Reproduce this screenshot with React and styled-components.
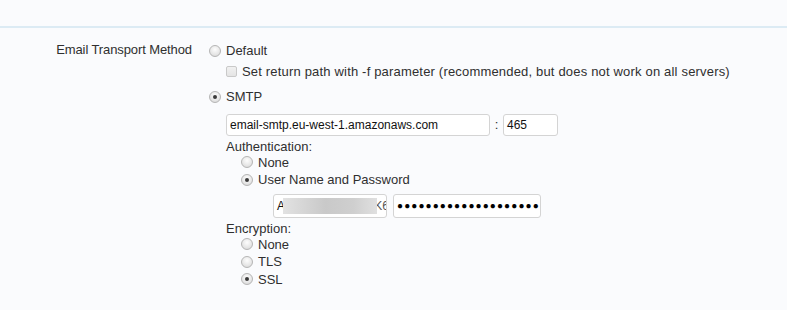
import React from 'react';
import styled, { createGlobalStyle } from 'styled-components';

const GlobalStyle = createGlobalStyle`
    html, body {
        margin: 0;
        padding: 0;
        background: #fafbfd;
    }
    body {
        font-family: "Liberation Sans", Arial, sans-serif;
        font-size: 13px;
        color: #2f2f2f;
    }
`

const Page = styled.div`
    width: 787px;
    height: 310px;
    background: #fafbfd;
    overflow: hidden;
`

const TopBar = styled.div`
    height: 26px;
    border-bottom: 2px solid #dcebf4;
`

const Form = styled.div`
    display: grid;
    grid-template-columns: 192px 1fr;
    column-gap: 17px;
    padding-top: 12px;
`

const FieldLabel = styled.div`
    text-align: right;
    line-height: 18px;
    margin-top: 1px;
    letter-spacing: -0.1px;
`

const Options = styled.div`
    display: flex;
    flex-direction: column;
`

const Choice = styled.label`
    display: flex;
    align-items: center;
    gap: 5px;
    height: 17.5px;
    margin-left: ${p => p.indent || 0}px;
    margin-top: ${p => p.top || 0}px;
`

const RadioDot = styled.span`
    width: 12px;
    height: 12px;
    border-radius: 50%;
    box-sizing: border-box;
    border: 1px solid #b5b5b5;
    background: radial-gradient(circle at 50% 35%, #fdfdfd 0%, #e6e6e6 60%, #d2d2d2 100%);
    display: flex;
    align-items: center;
    justify-content: center;
    flex-shrink: 0;
    &::after {
        content: '';
        width: 4px;
        height: 4px;
        border-radius: 50%;
        background: ${p => (p.checked ? '#3a3a3a' : 'transparent')};
    }
`

const CheckBox = styled.span`
    width: 11px;
    height: 11px;
    box-sizing: border-box;
    border: 1px solid #c9c9c9;
    border-radius: 2px;
    background: linear-gradient(#f1f1f1, #e4e4e4);
    flex-shrink: 0;
`

const LongText = styled.span`
    letter-spacing: 0.18px;
`

const Sub = styled.div`
    margin-left: 17px;
    display: flex;
    flex-direction: column;
`

const InputRow = styled.div`
    display: flex;
    align-items: center;
    margin-top: ${p => p.top || 0}px;
    margin-left: ${p => p.indent || 0}px;
`

const TextBox = styled.div`
    position: relative;
    box-sizing: border-box;
    width: ${p => p.w}px;
    height: ${p => p.h || 22}px;
    border: 1px solid #d4d4d4;
    border-radius: 3px;
    background: #fff;
    padding: 0 3px;
    display: flex;
    align-items: center;
    overflow: hidden;
    white-space: nowrap;
    font-size: 12px;
    color: #111;
`

const Colon = styled.span`
    width: 13px;
    text-align: center;
`

const Redact = styled.span`
    position: absolute;
    left: 9px;
    top: 3px;
    width: 94px;
    height: 16px;
    background: linear-gradient(90deg, #e2e2e2, #c9c9c9 45%, #cfcfcf 75%, #e0e0e0);
`

const Tail = styled.span`
    margin-left: auto;
    margin-right: -6px;
    color: #555;
`

const Dots = styled.span`
    font-size: 10px;
    letter-spacing: 1.1px;
    color: #000;
`

const SectionTitle = styled.div`
    line-height: 14px;
    margin-top: ${p => p.top || 0}px;
`

const Radio = ({ checked, children, indent, top }) => (
    <Choice indent={indent} top={top}>
        <RadioDot checked={checked} />
        <span>{children}</span>
    </Choice>
)

const App = () => {
    return (<Page>
        <GlobalStyle />
        <TopBar />
        <Form>
            <FieldLabel>Email Transport Method</FieldLabel>
            <Options>
                <Radio top={2}>Default</Radio>
                <Choice indent={17} top={3}>
                    <CheckBox />
                    <LongText>Set return path with -f parameter (recommended, but does not work on all servers)</LongText>
                </Choice>
                <Radio checked top={8}>SMTP</Radio>
                <Sub>
                    <InputRow top={8}>
                        <TextBox w={264}>email-smtp.eu-west-1.amazonaws.com</TextBox>
                        <Colon>:</Colon>
                        <TextBox w={55}>465</TextBox>
                    </InputRow>
                    <SectionTitle top={4}>Authentication:</SectionTitle>
                    <Radio indent={15}>None</Radio>
                    <Radio indent={15} checked>User Name and Password</Radio>
                    <InputRow indent={47} top={5}>
                        <TextBox w={114} h={24}>A<Redact /><Tail>K6</Tail></TextBox>
                        <InputRow indent={6}>
                            <TextBox w={148} h={24}><Dots>●●●●●●●●●●●●●●●●●●●●●●</Dots></TextBox>
                        </InputRow>
                    </InputRow>
                    <SectionTitle top={4}>Encryption:</SectionTitle>
                    <Radio indent={15}>None</Radio>
                    <Radio indent={15}>TLS</Radio>
                    <Radio indent={15} checked>SSL</Radio>
                </Sub>
            </Options>
        </Form>
    </Page>);
}

export default App;
